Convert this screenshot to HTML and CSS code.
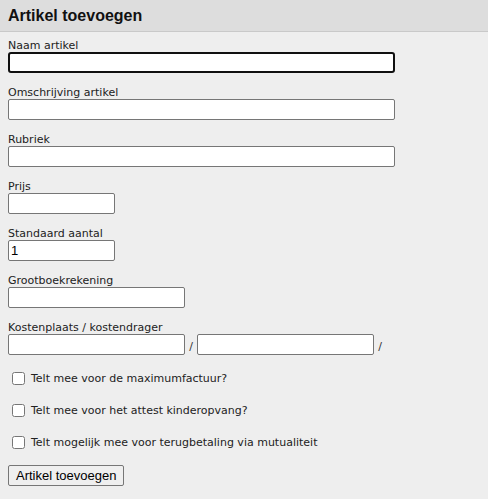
FILE: index.html
```html
<!DOCTYPE html>
<html>
<head>
<meta charset="utf-8">
<link rel="stylesheet" href="styles.css">
</head>
<body>
<div class="header"><h1 class="title">Artikel toevoegen</h1></div>
<form class="form">
  <div class="field">
    <label class="label">Naam artikel</label>
    <input class="input input-wide input-focus" type="text" value="">
  </div>
  <div class="field">
    <label class="label">Omschrijving artikel</label>
    <input class="input input-wide" type="text">
  </div>
  <div class="field">
    <label class="label">Rubriek</label>
    <input class="input input-wide" type="text">
  </div>
  <div class="field">
    <label class="label">Prijs</label>
    <input class="input input-small" type="text">
  </div>
  <div class="field">
    <label class="label">Standaard aantal</label>
    <input class="input input-small" type="text" value="1">
  </div>
  <div class="field">
    <label class="label">Grootboekrekening</label>
    <input class="input input-mid" type="text">
  </div>
  <div class="field">
    <label class="label">Kostenplaats / kostendrager</label>
    <div class="pair">
      <input class="input input-mid" type="text"><span class="slash">/</span><input class="input input-mid" type="text"><span class="slash">/</span>
    </div>
  </div>
  <div class="checks">
    <label class="check"><input type="checkbox" class="cb"><span>Telt mee voor de maximumfactuur?</span></label>
    <label class="check"><input type="checkbox" class="cb"><span>Telt mee voor het attest kinderopvang?</span></label>
    <label class="check"><input type="checkbox" class="cb"><span>Telt mogelijk mee voor terugbetaling via mutualiteit</span></label>
  </div>
  <button type="button" class="btn">Artikel toevoegen</button>
</form>
</body>
</html>
```
FILE: styles.css
```css
html, body {
  margin: 0;
  padding: 0;
  background: #eeeeee;
}
body {
  font-family: "DejaVu Sans", Verdana, sans-serif;
  font-size: 11px;
  color: #222;
}
.header {
  background: #dddddd;
  height: 31px;
  border-bottom: 1px solid #c9c9c9;
  display: flex;
  align-items: center;
  padding: 0 8px;
}
.title {
  margin: 0;
  font-family: "Liberation Sans", Arial, sans-serif;
  font-size: 16px;
  font-weight: bold;
  color: #111;
}
.form {
  padding: 7px 8px 0 8px;
  display: flex;
  flex-direction: column;
  align-items: flex-start;
}
.field {
  display: flex;
  flex-direction: column;
  align-items: flex-start;
  margin-bottom: 13px;
}
.label {
  display: block;
  height: 13px;
  line-height: 13px;
  color: #222;
}
.input {
  box-sizing: border-box;
  height: 21px;
  margin: 0;
  padding: 1px 2px;
  border: 1px solid #767676;
  border-radius: 2px;
  background: #fff;
  font-family: "Liberation Sans", Arial, sans-serif;
  font-size: 13px;
  color: #000;
  outline: none;
}
.input-wide { width: 387px; }
.input-small { width: 107px; }
.input-mid { width: 177px; }
.input-focus {
  border: 2px solid #101010;
  border-radius: 3px;
}
.pair {
  display: flex;
  align-items: center;
}
.slash {
  width: 12px;
  text-align: center;
  padding-top: 4px;
  color: #333;
}
.checks {
  display: flex;
  flex-direction: column;
  margin-top: -6px;
}
.check {
  display: flex;
  align-items: center;
  height: 32px;
}
.cb {
  width: 13px;
  height: 13px;
  margin: 0 6px 0 4px;
}
.btn {
  margin-top: 7px;
  height: 21px;
  padding: 0 7px;
  font-family: "Liberation Sans", Arial, sans-serif;
  font-size: 13px;
  border: 1px solid #767676;
  border-radius: 2px;
  background: #efefef;
  color: #000;
}
```
